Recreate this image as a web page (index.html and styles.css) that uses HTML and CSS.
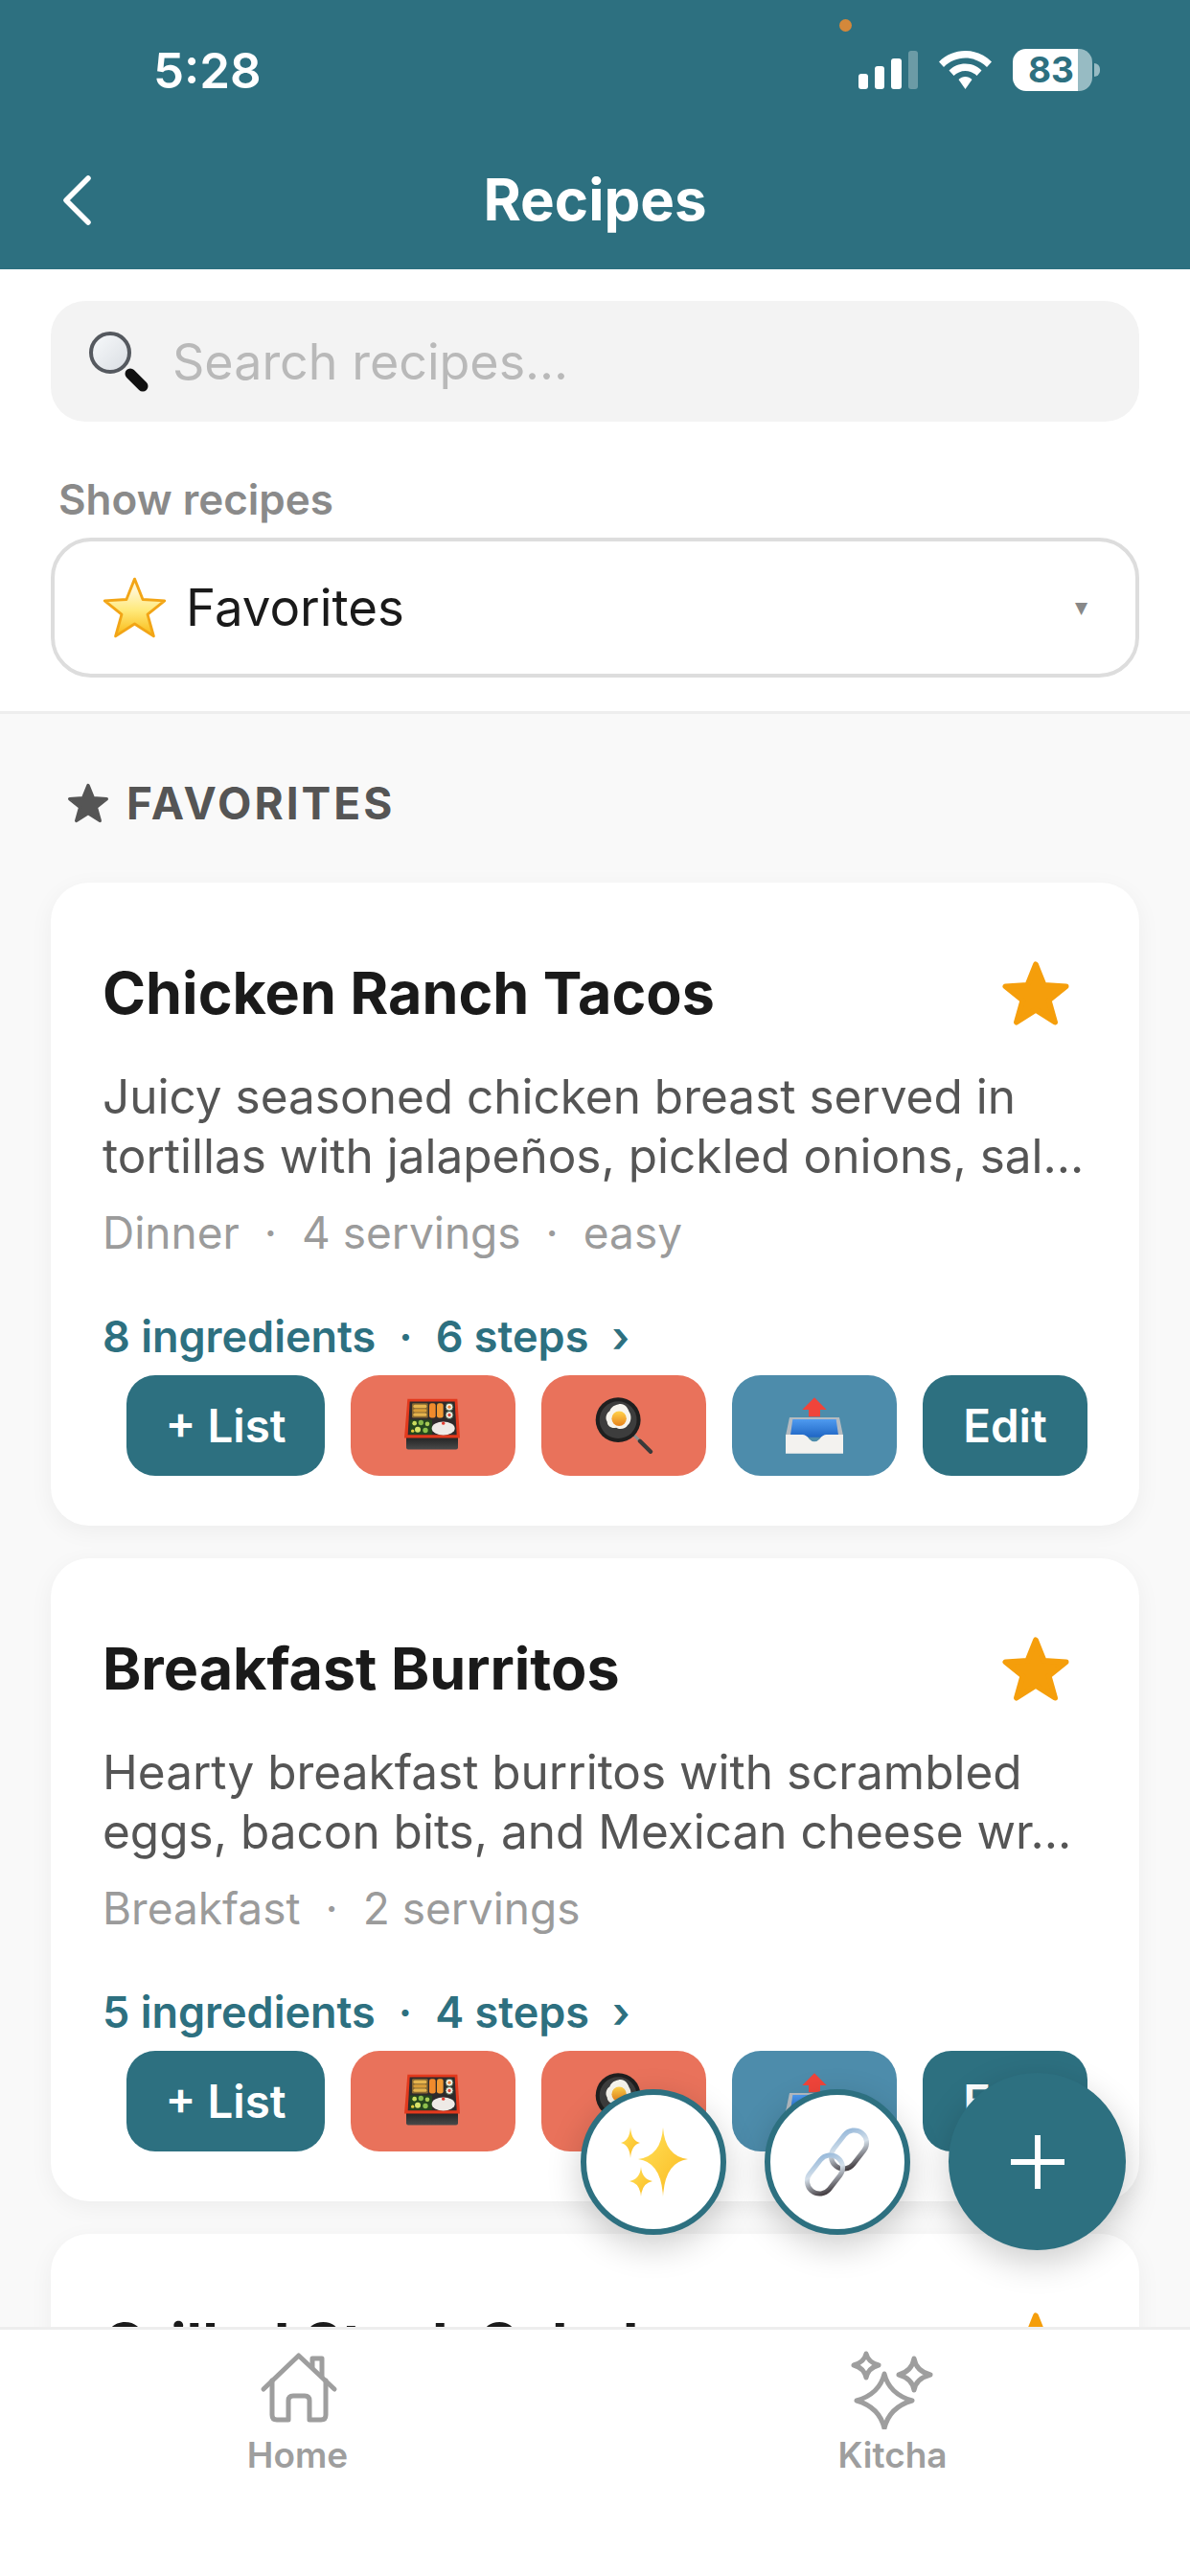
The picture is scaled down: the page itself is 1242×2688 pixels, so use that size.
FILE: index.html
```html
<!DOCTYPE html>
<html lang="en">
<head>
  <meta charset="UTF-8">
  <title>Recipes</title>
  <link rel="stylesheet" href="styles.css">
</head>
<body>
  <svg class="defs" width="0" height="0">
    <defs>
      <linearGradient id="yolk" x1="0" y1="0" x2="0" y2="1"><stop offset="0" stop-color="#ffd24a"/><stop offset="1" stop-color="#e8821a"/></linearGradient>
      <linearGradient id="goldstar" x1="0" y1="0" x2="0" y2="1"><stop offset="0.2" stop-color="#fff6cf"/><stop offset="0.55" stop-color="#ffe97a"/><stop offset="1" stop-color="#f9b912"/></linearGradient>
      <linearGradient id="spark" x1="0" y1="0" x2="1" y2="1"><stop offset="0" stop-color="#ffe25a"/><stop offset="1" stop-color="#fbb81f"/></linearGradient>
      <linearGradient id="tray" x1="0" y1="0" x2="0" y2="1"><stop offset="0" stop-color="#4f9bf0"/><stop offset="1" stop-color="#1f66c4"/></linearGradient>
      <linearGradient id="metal" x1="0" y1="0" x2="1" y2="1"><stop offset="0" stop-color="#8fb4d8"/><stop offset="0.45" stop-color="#d5e0ea"/><stop offset="1" stop-color="#2e2528"/></linearGradient>
      <linearGradient id="boxbase" x1="0" y1="0" x2="0" y2="1"><stop offset="0" stop-color="#1f1f1f"/><stop offset="1" stop-color="#4a4a4a"/></linearGradient>
      <linearGradient id="lens" x1="0" y1="0" x2="1" y2="1"><stop offset="0" stop-color="#f8fafc"/><stop offset="1" stop-color="#d9dde2"/></linearGradient>

      <symbol id="star" viewBox="0 0 100 96">
        <polygon points="50,6 62,36 94,38 69,58 78,90 50,72 22,90 31,58 6,38 38,36" stroke-width="8" stroke-linejoin="round" stroke="currentColor" fill="currentColor"/>
      </symbol>

      <symbol id="bento" viewBox="0 0 180 170">
        <rect x="6" y="118" width="162" height="42" rx="6" fill="url(#boxbase)"/>
        <polygon points="10,2 166,2 174,124 0,124" fill="#e2391d"/>
        <polygon points="17,10 158,10 164,114 11,114" fill="#2f2a2b"/>
        <rect x="24" y="15" width="50" height="46" rx="4" fill="#8a6a32"/>
        <rect x="28" y="20" width="42" height="10" rx="5" fill="#e5b44e"/>
        <rect x="28" y="33" width="42" height="10" rx="5" fill="#d89d38"/>
        <rect x="28" y="46" width="42" height="10" rx="5" fill="#e5b44e"/>
        <rect x="78" y="15" width="20" height="46" rx="7" fill="#f08a2c"/>
        <rect x="102" y="15" width="20" height="46" rx="7" fill="#f39a33"/>
        <circle cx="141" cy="27" r="12" fill="#f4f1e6" stroke="#3f5a45" stroke-width="3"/>
        <circle cx="141" cy="27" r="5" fill="#e8833a"/>
        <circle cx="141" cy="52" r="12" fill="#f4f1e6" stroke="#3f5a45" stroke-width="3"/>
        <circle cx="141" cy="52" r="5" fill="#d9483a"/>
        <rect x="17" y="67" width="70" height="46" fill="#25471e"/>
        <circle cx="32" cy="78" r="7" fill="#c9dc5d"/>
        <circle cx="52" cy="76" r="8" fill="#86b94a"/>
        <circle cx="72" cy="80" r="7" fill="#a9cb55"/>
        <circle cx="42" cy="98" r="9" fill="#d6e36a"/>
        <circle cx="66" cy="100" r="8" fill="#8cc04c"/>
        <circle cx="26" cy="102" r="5" fill="#e6cd3d"/>
        <ellipse cx="122" cy="94" rx="36" ry="21" fill="#eeeae6"/>
        <circle cx="122" cy="78" r="5" fill="#e23b2e"/>
      </symbol>

      <symbol id="pan" viewBox="0 0 185 175">
        <line x1="125" y1="118" x2="145" y2="138" stroke="#8f8f8f" stroke-width="9"/>
        <line x1="143" y1="136" x2="176" y2="169" stroke="#3a3a3a" stroke-width="13" stroke-linecap="round"/>
        <circle cx="75" cy="70" r="70" fill="#1f1f1f"/>
        <circle cx="75" cy="70" r="58" fill="#3d3d3d"/>
        <path d="M75 22c18-6 30 10 34 22 10 14 6 34-4 42-6 12-26 16-36 8-14 4-28-6-28-18-8-12-2-28 8-34 6-14 16-18 26-20z" fill="#f7f5ee"/>
        <circle cx="78" cy="66" r="23" fill="url(#yolk)"/>
      </symbol>

      <symbol id="outbox" viewBox="0 0 180 175">
        <polygon points="90,0 128,38 108,38 108,60 72,60 72,38 52,38" fill="#f0443a"/>
        <polygon points="12,62 168,62 180,120 0,120" fill="#b4bbc1"/>
        <polygon points="22,68 158,68 166,124 14,124" fill="url(#tray)"/>
        <path d="M0 116H52Q64 116 74 130Q90 146 106 130Q116 116 128 116H180V175H0Z" fill="#f3f2ef"/>
      </symbol>

      <symbol id="sparkles" viewBox="0 0 72 72">
        <path d="M46 0Q48 30 72 33Q48 36 46 72Q44 36 20 33Q44 30 46 0Z" fill="url(#spark)"/>
        <path d="M12 0Q13 14 22 16Q13 18 12 32Q11 18 2 16Q11 14 12 0Z" fill="url(#spark)"/>
        <path d="M23 41Q24 54 35 56Q24 58 23 72Q22 58 11 56Q22 54 23 41Z" fill="url(#spark)"/>
      </symbol>

      <symbol id="chain" viewBox="0 0 76 76">
        <rect x="37" y="3" width="26" height="44" rx="13" transform="rotate(38 50 25)" fill="none" stroke="url(#metal)" stroke-width="5"/>
        <rect x="12" y="29" width="26" height="44" rx="13" transform="rotate(38 25 51)" fill="none" stroke="url(#metal)" stroke-width="5"/>
      </symbol>
    </defs>
  </svg>

  <div class="app">
    <header class="topbar">
      <div class="status">
        <span class="clock">5:28</span>
        <div class="status-icons">
          <svg width="62" height="40" viewBox="0 0 62 40">
            <rect x="0" y="24" width="10" height="16" rx="3" fill="#fff"/>
            <rect x="17" y="16" width="10" height="24" rx="3" fill="#fff"/>
            <rect x="34" y="8" width="11" height="32" rx="3" fill="#fff"/>
            <rect x="52" y="0" width="10" height="40" rx="3" fill="#fff" opacity=".3"/>
          </svg>
          <svg width="55" height="40" viewBox="0 0 55 40">
            <path d="M27.5 0C38 0 47.500 4 55 11.500L50 17C44 11 36 7.500 27.500 7.500S11 11 5 17L0 11.500C7.500 4 17 0 27.500 0Z" fill="#fff"/>
            <path d="M27.500 13.500C34 13.500 40 16 44.500 20.500L39.500 26C36.500 23 32 21 27.500 21S18.500 23 15.500 26L10.500 20.500C15 16 21 13.500 27.500 13.500Z" fill="#fff"/>
            <path d="M27.500 27C30 27 32.500 28 34.500 30L27.500 40L20.500 30C22.500 28 25 27 27.500 27Z" fill="#fff"/>
          </svg>
          <div class="battery"><span>83</span></div>
          <span class="battery-nub"></span>
        </div>
      </div>
      <div class="title-row">
        <svg class="back" width="30" height="52" viewBox="0 0 30 52"><path d="M27 3L4 26L27 49" fill="none" stroke="#fff" stroke-width="5.500" stroke-linecap="round" stroke-linejoin="round"/></svg>
        <h1>Recipes</h1>
      </div>
      <span class="mic-dot"></span>
    </header>

    <section class="filters">
      <div class="search">
        <svg class="search-icon" width="66" height="63" viewBox="0 0 66 63">
          <line x1="46" y1="44" x2="59" y2="57" stroke="#111" stroke-width="11" stroke-linecap="round"/>
          <circle cx="25" cy="22" r="20" fill="url(#lens)" stroke="#55595f" stroke-width="4"/>
        </svg>
        <span class="placeholder">Search recipes...</span>
      </div>
      <label class="filter-label">Show recipes</label>
      <div class="select">
        <svg width="67" height="64" viewBox="3 3 94 90"><polygon points="50,6 62,36 94,38 69,58 78,90 50,72 22,90 31,58 6,38 38,36" fill="url(#goldstar)" stroke="#f2a516" stroke-width="4" stroke-linejoin="round"/></svg>
        <span class="select-text">Favorites</span>
        <span class="caret">▼</span>
      </div>
    </section>

    <main class="list">
      <h2 class="section-title"><svg class="section-star" width="44" height="42"><use href="#star"/></svg>FAVORITES</h2>

      <article class="card">
        <div class="card-head">
          <h3>Chicken Ranch Tacos</h3>
          <svg class="fav" width="72" height="69"><use href="#star"/></svg>
        </div>
        <p class="desc">Juicy seasoned chicken breast served in tortillas with jalapeños, pickled onions, sal…</p>
        <div class="meta"><span>Dinner</span><span>·</span><span>4 servings</span><span>·</span><span>easy</span></div>
        <div class="counts"><span>8 ingredients</span><span>·</span><span>6 steps</span><span>›</span></div>
        <div class="actions">
          <button class="btn btn-list">+ List</button>
          <button class="btn btn-coral"><svg width="60" height="57"><use href="#bento"/></svg></button>
          <button class="btn btn-coral"><svg width="62" height="59"><use href="#pan"/></svg></button>
          <button class="btn btn-blue"><svg width="60" height="59"><use href="#outbox"/></svg></button>
          <button class="btn btn-edit">Edit</button>
        </div>
      </article>

      <article class="card">
        <div class="card-head">
          <h3>Breakfast Burritos</h3>
          <svg class="fav" width="72" height="69"><use href="#star"/></svg>
        </div>
        <p class="desc">Hearty breakfast burritos with scrambled eggs, bacon bits, and Mexican cheese wr…</p>
        <div class="meta"><span>Breakfast</span><span>·</span><span>2 servings</span></div>
        <div class="counts"><span>5 ingredients</span><span>·</span><span>4 steps</span><span>›</span></div>
        <div class="actions">
          <button class="btn btn-list">+ List</button>
          <button class="btn btn-coral"><svg width="60" height="57"><use href="#bento"/></svg></button>
          <button class="btn btn-coral"><svg width="62" height="59"><use href="#pan"/></svg></button>
          <button class="btn btn-blue"><svg width="60" height="59"><use href="#outbox"/></svg></button>
          <button class="btn btn-edit">Edit</button>
        </div>
      </article>

      <article class="card">
        <div class="card-head">
          <h3>Grilled Steak Salad</h3>
          <svg class="fav" width="72" height="69"><use href="#star"/></svg>
        </div>
      </article>
    </main>

    <div class="fabs">
      <button class="fab-small"><svg width="72" height="72"><use href="#sparkles"/></svg></button>
      <button class="fab-small"><svg width="76" height="76"><use href="#chain"/></svg></button>
      <button class="fab-main">
        <svg width="56" height="56" viewBox="0 0 56 56"><path d="M28 0V56M0 28H56" stroke="#fff" stroke-width="6"/></svg>
      </button>
    </div>

    <nav class="tabs">
      <div class="tab">
        <svg width="90" height="80" viewBox="15 15 90 80" fill="none" stroke="#9e9e9e" stroke-width="5" stroke-linecap="round" stroke-linejoin="round">
          <path d="M24 59L60.700 24L98 59"/>
          <path d="M33 50V86Q33 91 38 91H50V71Q50 66 55 66H67Q72 66 72 71V91H84Q89 91 89 86V50"/>
          <path d="M75 36V27H85V46"/>
        </svg>
        <span>Home</span>
      </div>
      <div class="tab">
        <svg width="90" height="86" viewBox="8 12 90 86" fill="none" stroke="#9e9e9e" stroke-width="5" stroke-linejoin="round">
          <path d="M44 40Q49 61 73 68Q49 75 44 97Q39 75 15 68Q39 61 44 40Z"/>
          <path d="M25 19Q27 28 38 31Q27 34 25 44Q23 34 12 31Q23 28 25 19Z"/>
          <path d="M75 24Q77 37 92 41Q77 45 75 57Q73 45 59 41Q73 37 75 24Z"/>
        </svg>
        <span>Kitcha</span>
      </div>
    </nav>
  </div>
</body>
</html>
```
FILE: styles.css
```css
* {
  box-sizing: border-box;
}
html, body {
  margin: 0;
  padding: 0;
}
body {
  font-family: Inter, "Liberation Sans", sans-serif;
  color: #1a1a1a;
  background-color: #fff;
}
.defs {
  position: absolute;
}
.app {
  position: relative;
  width: 1242px;
  height: 2688px;
  display: flex;
  flex-direction: column;
  overflow: hidden;
}

/* Header */
.topbar {
  position: relative;
  flex: none;
  height: 281px;
  background-color: #2d7080;
  color: #fff;
}
.status {
  height: 150px;
  padding: 51px 94px 0 160px;
  display: flex;
  justify-content: space-between;
  align-items: flex-start;
}
.clock {
  font-size: 51px;
  line-height: 46px;
  font-weight: 600;
}
.status-icons {
  display: flex;
  align-items: center;
  gap: 22px;
  height: 44px;
}
.battery {
  width: 83px;
  height: 44px;
  border-radius: 14px;
  background: linear-gradient(90deg, #fff 0, #fff 82%, #97bbc3 82%);
  color: #2d7080;
  font-size: 37px;
  font-weight: 700;
  line-height: 44px;
  padding-left: 16px;
}
.battery-nub {
  width: 6px;
  height: 14px;
  margin-left: -20px;
  border-radius: 0 7px 7px 0;
  background-color: #97bbc3;
}
.title-row {
  position: relative;
  display: flex;
  justify-content: center;
  align-items: center;
  height: 116px;
}
.title-row h1 {
  margin: 0;
  font-size: 60px;
  font-weight: 700;
}
.back {
  position: absolute;
  left: 65px;
  top: 33px;
}
.mic-dot {
  position: absolute;
  left: 876px;
  top: 20px;
  width: 13px;
  height: 13px;
  border-radius: 50%;
  background-color: #d4883a;
}

/* Search and filter */
.filters {
  flex: none;
  height: 464px;
  padding: 33px 53px 0;
  border-bottom: 3px solid #eee;
  background-color: #fff;
}
.search {
  display: flex;
  align-items: center;
  gap: 24px;
  height: 126px;
  padding-left: 37px;
  border-radius: 36px;
  background-color: #f3f3f3;
}
.search-icon {
  flex: none;
}
.placeholder {
  font-size: 52px;
  color: #b9b9b9;
}
.filter-label {
  display: block;
  margin: 56px 0 15px 8px;
  font-size: 44px;
  line-height: 50px;
  font-weight: 600;
  color: #8a8a8a;
}
.select {
  display: flex;
  align-items: center;
  gap: 20px;
  height: 146px;
  padding: 0 50px;
  border: 4px solid #ddd;
  border-radius: 42px;
}
.select-text {
  font-size: 52.800px;
}
.caret {
  margin-left: auto;
  font-family: "DejaVu Sans", sans-serif;
  font-size: 17px;
  color: #888;
}

/* Recipe list */
.list {
  flex: 1;
  min-height: 0;
  padding: 0 53px;
  overflow: hidden;
  background-color: #f9f9f9;
}
.section-title {
  display: flex;
  align-items: center;
  gap: 18px;
  height: 176px;
  margin: 0;
  padding: 10px 0 0 17px;
  font-size: 46px;
  font-weight: 700;
  letter-spacing: 3px;
  color: #555;
}
.section-star {
  color: #555;
}
.card {
  height: 671px;
  margin-bottom: 34px;
  padding: 75px 54px 52px;
  border-radius: 40px;
  background-color: #fff;
  box-shadow: 0 6px 24px rgba(0, 0, 0, 0.05);
}
.card-head {
  display: flex;
  justify-content: space-between;
  align-items: center;
  height: 80px;
  padding-right: 18px;
}
.card-head h3 {
  margin: 0;
  font-size: 61px;
  font-weight: 700;
}
.desc {
  margin: 37px 0 0;
  font-size: 49.500px;
  line-height: 62px;
  color: #555;
}
.meta, .counts {
  display: flex;
  line-height: 56px;
}
.meta {
  gap: 26px;
  margin-top: 21px;
  font-size: 46px;
  color: #9b9b9b;
}
.counts {
  gap: 24px;
  margin-top: 53px;
  font-size: 45px;
  font-weight: 600;
  color: #2d7080;
}
.actions {
  display: flex;
  justify-content: flex-end;
  gap: 27px;
  margin-top: 12px;
}
.btn {
  display: flex;
  justify-content: center;
  align-items: center;
  width: 172px;
  height: 105px;
  padding: 0;
  border: none;
  border-radius: 30px;
  color: #fff;
  font-family: inherit;
  font-size: 47.500px;
  font-weight: 600;
}
.btn-list {
  width: 207px;
  background-color: #2d7080;
}
.btn-edit {
  background-color: #2d7080;
}
.btn-coral {
  background-color: #e9725b;
}
.btn-blue {
  background-color: #4d8cab;
}
.fav {
  color: #f59e0b;
}

/* Floating buttons */
.fabs {
  position: absolute;
  right: 67px;
  bottom: 340px;
  display: flex;
  align-items: center;
  gap: 40px;
}
.fab-small, .fab-main {
  display: flex;
  justify-content: center;
  align-items: center;
  padding: 0;
  border-radius: 50%;
  box-shadow: 0 12px 36px rgba(0, 0, 0, 0.2);
}
.fab-small {
  width: 152px;
  height: 152px;
  border: 6px solid #2d7080;
  background-color: #fff;
}
.fab-main {
  width: 185px;
  height: 185px;
  border: none;
  background-color: #2d7080;
}

/* Bottom tabs */
.tabs {
  flex: none;
  display: flex;
  height: 260px;
  border-top: 3px solid #eee;
  background-color: #fff;
  position: relative;
}
.tab {
  flex: 1;
  display: flex;
  flex-direction: column;
  align-items: center;
  height: 153px;
  padding-top: 18px;
  color: #9e9e9e;
  font-size: 37px;
  font-weight: 600;
}
.tab svg {
  flex: none;
}
.tab span {
  margin-top: auto;
  line-height: 44px;
}
```
